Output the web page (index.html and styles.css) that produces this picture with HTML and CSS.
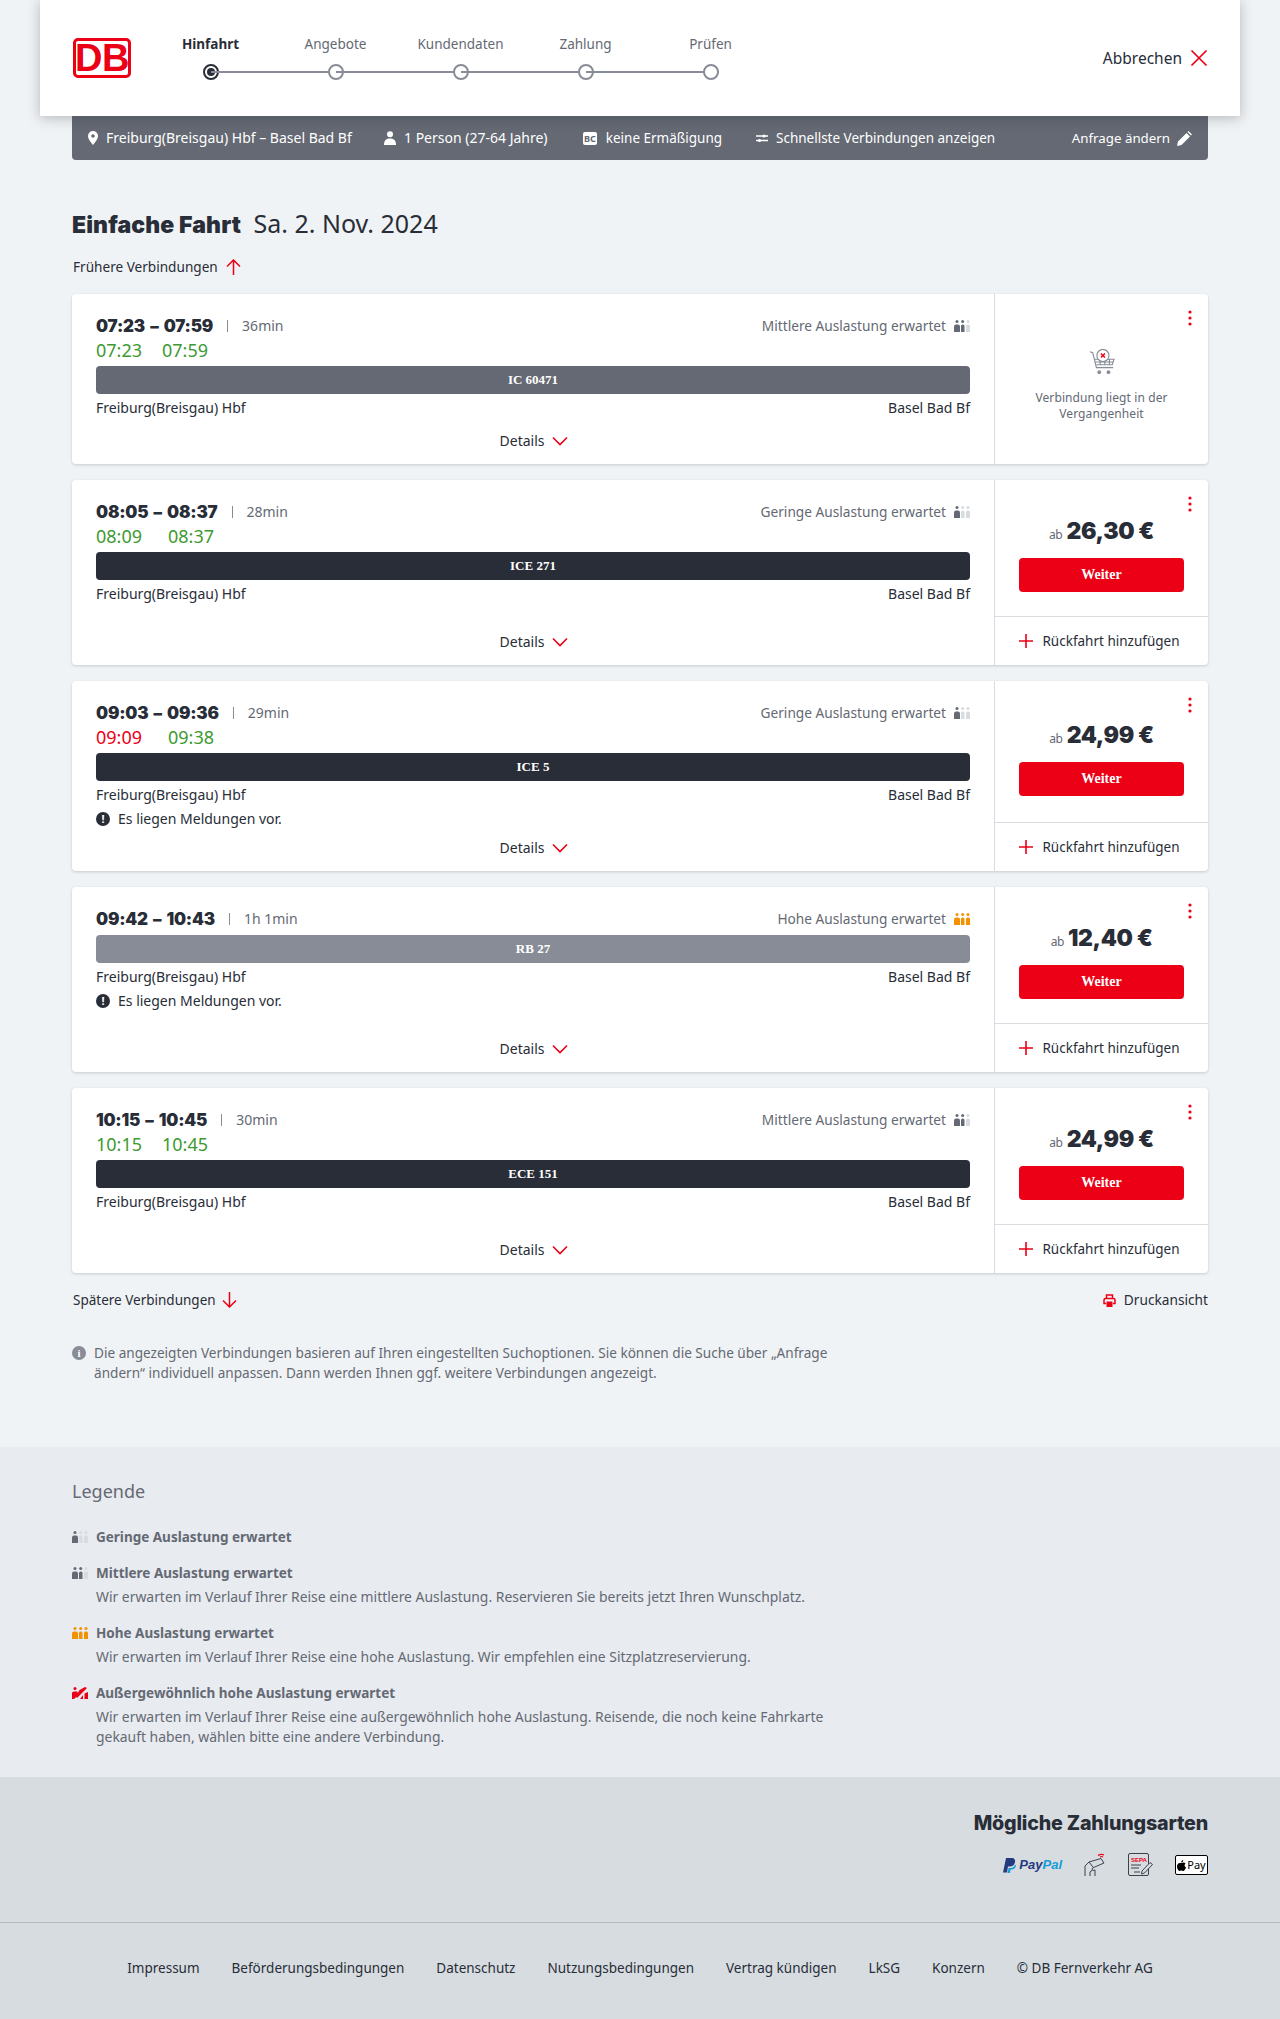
FILE: index.html
```html
<!DOCTYPE html>
<html lang="de">
<head>
    <meta charset="UTF-8">
    <meta name="viewport" content="width=device-width, initial-scale=1.0">
    <title>Einfache Fahrt</title>
    <link rel="stylesheet" href="styles.css">
</head>
<body>
    <svg class="defs" width="0" height="0">
        <symbol id="occ" viewBox="0 0 16 12">
            <circle class="p1" cx="3" cy="1.6" r="1.5"/>
            <path class="p1" d="M0 12V6.500Q0 4.500 2 4.500H4Q6 4.500 6 6.500V12Z"/>
            <circle class="p2" cx="8.700" cy="1.6" r="1.5"/>
            <path class="p2" d="M7 12V6Q7 4.500 8.500 4.500H9Q10.500 4.500 10.500 6V12Z"/>
            <circle class="p3" cx="14" cy="1.6" r="1.5"/>
            <path class="p3" d="M12 12V6Q12 4.500 13.500 4.500H14.500Q16 4.500 16 6V12Z"/>
        </symbol>
        <symbol id="chev" viewBox="0 0 16 10"><path d="M1 1.500 8 8.500 15 1.500" fill="none" stroke="#ec0016" stroke-width="1.6"/></symbol>
        <symbol id="plus" viewBox="0 0 16 16"><path d="M8 1V15M1 8H15" fill="none" stroke="#ec0016" stroke-width="1.6"/></symbol>
        <symbol id="dots" viewBox="0 0 4 16"><circle cx="2" cy="2" r="1.6"/><circle cx="2" cy="8" r="1.6"/><circle cx="2" cy="14" r="1.6"/></symbol>
    </svg>

    <header class="topbar">
        <div class="logo"><span>DB</span></div>
        <ol class="steps">
            <li class="step current"><span class="step-label">Hinfahrt</span><span class="step-dot"></span></li>
            <li class="step"><span class="step-label">Angebote</span><span class="step-dot"></span></li>
            <li class="step"><span class="step-label">Kundendaten</span><span class="step-dot"></span></li>
            <li class="step"><span class="step-label">Zahlung</span><span class="step-dot"></span></li>
            <li class="step"><span class="step-label">Prüfen</span><span class="step-dot"></span></li>
        </ol>
        <a class="cancel">Abbrechen
            <svg width="18" height="18" viewBox="0 0 18 18"><path d="M1.500 1.500 16.500 16.500M16.500 1.500 1.500 16.500" fill="none" stroke="#ec0016" stroke-width="1.7"/></svg>
        </a>
    </header>

    <main class="page">
        <div class="query">
            <span class="query-item query-route">
                <svg width="10" height="14" viewBox="0 0 10 14"><path fill="#fff" fill-rule="evenodd" d="M5 0a5 5 0 0 1 5 5c0 3.500-5 9-5 9S0 8.500 0 5a5 5 0 0 1 5-5Zm0 3.200a1.800 1.800 0 1 0 0 3.600 1.800 1.800 0 0 0 0-3.600Z"/></svg>
                Freiburg(Breisgau) Hbf – Basel Bad Bf
            </span>
            <span class="query-item query-person">
                <svg width="12" height="14" viewBox="0 0 12 14"><circle cx="6" cy="3.200" r="3" fill="#fff"/><path fill="#fff" d="M0 14c0-4 1.500-6.500 6-6.500S12 10 12 14Z"/></svg>
                1 Person (27-64 Jahre)
            </span>
            <span class="query-item query-card">
                <span class="bc">BC</span>
                keine Ermäßigung
            </span>
            <span class="query-item query-filter">
                <svg width="12" height="10" viewBox="0 0 12 10"><path fill="none" stroke="#fff" stroke-width="1.300" d="M0 3H12M0 7.500H12"/><circle cx="8" cy="3" r="1.600" fill="#fff"/><circle cx="3.500" cy="7.500" r="1.600" fill="#fff"/></svg>
                Schnellste Verbindungen anzeigen
            </span>
            <span class="query-edit">Anfrage ändern
                <svg width="15" height="15" viewBox="0 0 15 15"><path fill="#fff" d="M0 15 1 10.500 9.500 2 13 5.500 4.500 14ZM10.500 1 11.500 0 15 3.500 14 4.500Z"/></svg>
            </span>
        </div>

        <h1 class="title"><strong>Einfache Fahrt</strong> Sa. 2. Nov. 2024</h1>

        <a class="more more-up">Frühere Verbindungen
            <svg width="15" height="16" viewBox="0 0 15 16"><path d="M7.500 16V1M1 7.500 7.500 1 14 7.500" fill="none" stroke="#ec0016" stroke-width="1.500"/></svg>
        </a>

        <section class="results">
            <article class="card">
                <div class="card-main">
                    <div class="time-row">
                        <span class="time">07:23 – 07:59</span><span class="sep"></span><span class="dur">36min</span>
                        <span class="occ occ-mid">Mittlere Auslastung erwartet <svg width="16" height="12"><use href="#occ"/></svg></span>
                    </div>
                    <div class="rt"><span class="ok rt-a">07:23</span><span class="ok">07:59</span></div>
                    <div class="train train-ic">IC 60471</div>
                    <div class="stations"><span>Freiburg(Breisgau) Hbf</span><span>Basel Bad Bf</span></div>
                    <a class="details">Details <svg width="16" height="10"><use href="#chev"/></svg></a>
                </div>
                <aside class="card-side">
                    <svg class="menu" width="4" height="16"><use href="#dots"/></svg>
                    <div class="past">
                        <svg width="26" height="26" viewBox="0 0 28 28" fill="none" stroke="#878c96" stroke-width="1.200">
                            <path d="M1 3 4 4 8 20H26M6 11H27L25 17H8M7 14H26M12 11V17M17 11V17M22 11V17"/>
                            <circle cx="15" cy="7" r="6.500" fill="#fff"/>
                            <path d="M12.800 4.800 17.200 9.200M17.200 4.800 12.800 9.200" stroke="#ec0016" stroke-width="1.600"/>
                            <circle cx="11" cy="25" r="2" fill="#878c96" stroke="none"/>
                            <circle cx="21" cy="25" r="2" fill="#878c96" stroke="none"/>
                        </svg>
                        <p>Verbindung liegt in der<br>Vergangenheit</p>
                    </div>
                </aside>
            </article>

            <article class="card">
                <div class="card-main">
                    <div class="time-row">
                        <span class="time">08:05 – 08:37</span><span class="sep"></span><span class="dur">28min</span>
                        <span class="occ occ-low">Geringe Auslastung erwartet <svg width="16" height="12"><use href="#occ"/></svg></span>
                    </div>
                    <div class="rt"><span class="ok rt-b">08:09</span><span class="ok">08:37</span></div>
                    <div class="train train-ice">ICE 271</div>
                    <div class="stations"><span>Freiburg(Breisgau) Hbf</span><span>Basel Bad Bf</span></div>
                    <a class="details">Details <svg width="16" height="10"><use href="#chev"/></svg></a>
                </div>
                <aside class="card-side">
                    <svg class="menu" width="4" height="16"><use href="#dots"/></svg>
                    <div class="offer">
                        <div class="price"><small>ab</small> 26,30 €</div>
                        <button class="next">Weiter</button>
                    </div>
                    <a class="return"><svg width="16" height="16"><use href="#plus"/></svg> Rückfahrt hinzufügen</a>
                </aside>
            </article>

            <article class="card">
                <div class="card-main">
                    <div class="time-row">
                        <span class="time">09:03 – 09:36</span><span class="sep"></span><span class="dur">29min</span>
                        <span class="occ occ-low">Geringe Auslastung erwartet <svg width="16" height="12"><use href="#occ"/></svg></span>
                    </div>
                    <div class="rt"><span class="late rt-b">09:09</span><span class="ok">09:38</span></div>
                    <div class="train train-ice">ICE 5</div>
                    <div class="stations"><span>Freiburg(Breisgau) Hbf</span><span>Basel Bad Bf</span></div>
                    <div class="notice"><span class="notice-icon">!</span>Es liegen Meldungen vor.</div>
                    <a class="details">Details <svg width="16" height="10"><use href="#chev"/></svg></a>
                </div>
                <aside class="card-side">
                    <svg class="menu" width="4" height="16"><use href="#dots"/></svg>
                    <div class="offer">
                        <div class="price"><small>ab</small> 24,99 €</div>
                        <button class="next">Weiter</button>
                    </div>
                    <a class="return"><svg width="16" height="16"><use href="#plus"/></svg> Rückfahrt hinzufügen</a>
                </aside>
            </article>

            <article class="card">
                <div class="card-main">
                    <div class="time-row">
                        <span class="time">09:42 – 10:43</span><span class="sep"></span><span class="dur">1h 1min</span>
                        <span class="occ occ-high">Hohe Auslastung erwartet <svg width="16" height="12"><use href="#occ"/></svg></span>
                    </div>
                    <div class="train train-rb">RB 27</div>
                    <div class="stations"><span>Freiburg(Breisgau) Hbf</span><span>Basel Bad Bf</span></div>
                    <div class="notice"><span class="notice-icon">!</span>Es liegen Meldungen vor.</div>
                    <a class="details">Details <svg width="16" height="10"><use href="#chev"/></svg></a>
                </div>
                <aside class="card-side">
                    <svg class="menu" width="4" height="16"><use href="#dots"/></svg>
                    <div class="offer">
                        <div class="price"><small>ab</small> 12,40 €</div>
                        <button class="next">Weiter</button>
                    </div>
                    <a class="return"><svg width="16" height="16"><use href="#plus"/></svg> Rückfahrt hinzufügen</a>
                </aside>
            </article>

            <article class="card">
                <div class="card-main">
                    <div class="time-row">
                        <span class="time">10:15 – 10:45</span><span class="sep"></span><span class="dur">30min</span>
                        <span class="occ occ-mid">Mittlere Auslastung erwartet <svg width="16" height="12"><use href="#occ"/></svg></span>
                    </div>
                    <div class="rt"><span class="ok rt-a">10:15</span><span class="ok">10:45</span></div>
                    <div class="train train-ice">ECE 151</div>
                    <div class="stations"><span>Freiburg(Breisgau) Hbf</span><span>Basel Bad Bf</span></div>
                    <a class="details">Details <svg width="16" height="10"><use href="#chev"/></svg></a>
                </div>
                <aside class="card-side">
                    <svg class="menu" width="4" height="16"><use href="#dots"/></svg>
                    <div class="offer">
                        <div class="price"><small>ab</small> 24,99 €</div>
                        <button class="next">Weiter</button>
                    </div>
                    <a class="return"><svg width="16" height="16"><use href="#plus"/></svg> Rückfahrt hinzufügen</a>
                </aside>
            </article>
        </section>

        <div class="after-list">
            <a class="more">Spätere Verbindungen
                <svg width="15" height="16" viewBox="0 0 15 16"><path d="M7.500 0V15M1 8.500 7.500 15 14 8.500" fill="none" stroke="#ec0016" stroke-width="1.500"/></svg>
            </a>
            <a class="print">
                <svg width="13" height="13" viewBox="0 0 13 13"><path fill="none" stroke="#ec0016" stroke-width="1.500" d="M3.500 4V1H9.500V4M3 9.500H1V6Q1 4.500 2.500 4.500H10.500Q12 4.500 12 6V9.500H10"/><path fill="#ec0016" d="M3.500 7.500H9.500V13H3.500Z"/></svg>
                Druckansicht
            </a>
        </div>

        <p class="note"><span class="note-icon">i</span>Die angezeigten Verbindungen basieren auf Ihren eingestellten Suchoptionen. Sie können die Suche über „Anfrage ändern“ individuell anpassen. Dann werden Ihnen ggf. weitere Verbindungen angezeigt.</p>
    </main>

    <section class="legend">
        <div class="legend-inner">
            <h2>Legende</h2>
            <dl class="legend-list">
                <div class="legend-item occ-low">
                    <dt><svg width="16" height="12"><use href="#occ"/></svg>Geringe Auslastung erwartet</dt>
                </div>
                <div class="legend-item occ-mid">
                    <dt><svg width="16" height="12"><use href="#occ"/></svg>Mittlere Auslastung erwartet</dt>
                    <dd>Wir erwarten im Verlauf Ihrer Reise eine mittlere Auslastung. Reservieren Sie bereits jetzt Ihren Wunschplatz.</dd>
                </div>
                <div class="legend-item occ-high">
                    <dt><svg width="16" height="12"><use href="#occ"/></svg>Hohe Auslastung erwartet</dt>
                    <dd>Wir erwarten im Verlauf Ihrer Reise eine hohe Auslastung. Wir empfehlen eine Sitzplatzreservierung.</dd>
                </div>
                <div class="legend-item occ-full">
                    <dt><svg width="16" height="12" viewBox="0 0 16 12"><circle cx="3" cy="1.600" r="1.500" fill="#ec0016"/><path fill="#ec0016" d="M0 12V6Q0 4.500 2 4.500H5L6 5.500V8.500L2 12Z"/><path fill="#ec0016" d="M7.500 3 13 0 15 1 5 11 4 9.500ZM8 12 11 8V12ZM12.500 12V6.500L16 5V12Z"/></svg>Außergewöhnlich hohe Auslastung erwartet</dt>
                    <dd>Wir erwarten im Verlauf Ihrer Reise eine außergewöhnlich hohe Auslastung. Reisende, die noch keine Fahrkarte gekauft haben, wählen bitte eine andere Verbindung.</dd>
                </div>
            </dl>
        </div>
    </section>

    <section class="payments">
        <h2>Mögliche Zahlungsarten</h2>
        <div class="pay-icons">
            <span class="paypal">
                <svg width="13" height="15" viewBox="0 0 13 15"><path fill="#253b80" d="M3 0H8.500C11.500 0 12.500 2 12 4.200 11.400 7 9.500 8.500 6.500 8.500H5L4 14.500H0Z"/><path fill="#179bd7" d="M5.500 10H8C10 10 11.500 8.500 12 6.500L13 7.500C12.500 10 11 11.500 8.500 11.500H7.500L7 15H4.500Z"/></svg>
                <b>Pay</b><i>Pal</i>
            </span>
            <svg width="22" height="24" viewBox="0 0 22 24" fill="none" stroke="#3c414b" stroke-width="1">
                <path d="M1 23V13L5 9 17 5.500 20 10 8.500 15 8 17.500 6 19V23M11 23V17L8.500 17.500M5 9 9 14"/>
                <path d="M14 2.500Q17 0.500 20 2M16 4Q17.500 3 19 4" stroke="#ec0016" stroke-width="1.200"/>
            </svg>
            <svg width="25" height="24" viewBox="0 0 25 24">
                <rect x="0.500" y="0.500" width="20" height="22" rx="1.500" fill="none" stroke="#3c414b"/>
                <text x="3" y="8.500" class="sepa">SEPA</text>
                <path d="M3 12H13M3 15H11M6 19H12" stroke="#3c414b" fill="none"/>
                <path d="M14 18 22 9.500 24.500 11.500 16.500 20 13.500 21Z" fill="#d7dce1" stroke="#3c414b"/>
            </svg>
            <span class="applepay">
                <svg width="9" height="11" viewBox="0 0 9 11"><path d="M6.200 0C6.300 1.200 5.300 2.400 4.200 2.400 4 1.200 5.200 0.100 6.200 0ZM4.300 3C5 3 5.500 2.500 6.500 2.500 7.300 2.500 8 3 8.500 3.600 7 4.500 7.300 6.800 9 7.500 8.500 9 7.300 11 6.300 11 5.500 11 5.200 10.500 4.300 10.500 3.400 10.500 3.100 11 2.400 11 1.300 11 0 8.700 0 6.500 0 4.300 1.400 3 2.700 2.900 3.400 2.900 3.900 3 4.300 3Z"/></svg>Pay
            </span>
        </div>
    </section>

    <footer class="footer">
        <a>Impressum</a>
        <a>Beförderungsbedingungen</a>
        <a>Datenschutz</a>
        <a>Nutzungsbedingungen</a>
        <a>Vertrag kündigen</a>
        <a>LkSG</a>
        <a>Konzern</a>
        <span>© DB Fernverkehr AG</span>
    </footer>
</body>
</html>
```

FILE: styles.css
```css
* {
    box-sizing: border-box;
}

body {
    margin: 0;
    background: #f0f3f5;
    color: #282d37;
    font-family: "Noto Sans", "Open Sans", sans-serif;
    font-size: 14px;
    line-height: 20px;
}

.defs {
    position: absolute;
}

h1, h2, p, ol, dl, dd {
    margin: 0;
    padding: 0;
}

svg {
    flex: none;
}

/* top bar */
.topbar {
    position: relative;
    z-index: 2;
    display: flex;
    align-items: center;
    height: 116px;
    margin: 0 40px;
    padding: 0 32px 0 33px;
    background: #fff;
    box-shadow: 0 2px 12px rgba(40, 45, 55, 0.3);
}

.logo {
    display: flex;
    align-items: center;
    justify-content: center;
    width: 58px;
    height: 40px;
    border: 3px solid #ec0016;
    border-radius: 5px;
    color: #ec0016;
    font-family: "Liberation Sans Narrow", "Liberation Sans", sans-serif;
    font-size: 38px;
    font-weight: 700;
    letter-spacing: -0.5px;
}

.steps {
    display: flex;
    list-style: none;
    margin-left: 17px;
}

.step {
    position: relative;
    display: flex;
    flex-direction: column;
    align-items: center;
    width: 125px;
    height: 56px;
    padding-top: 4px;
    color: #646973;
    font-size: 13.5px;
}

.step + .step::before {
    content: "";
    position: absolute;
    top: 41px;
    left: -62px;
    width: 125px;
    height: 2px;
    background: #878c96;
}

.step-label {
    line-height: 20px;
}

.step-dot {
    position: relative;
    width: 16px;
    height: 16px;
    margin-top: 10px;
    border: 2px solid #878c96;
    border-radius: 50%;
    background: #fff;
}

.current {
    color: #282d37;
    font-weight: 700;
}

.current .step-dot {
    border-color: #282d37;
}

.current .step-dot::after {
    content: "";
    position: absolute;
    top: 2px;
    left: 2px;
    width: 8px;
    height: 8px;
    border-radius: 50%;
    background: #282d37;
}

.cancel {
    display: flex;
    align-items: center;
    gap: 8px;
    margin-left: auto;
    font-size: 15.5px;
}

/* page */
.page {
    width: 1136px;
    margin: 0 auto;
    height: 1331px;
}

.query {
    display: flex;
    align-items: center;
    height: 44px;
    padding: 0 16px;
    background: #646973;
    border-radius: 0 0 4px 4px;
    color: #fff;
    font-size: 13.5px;
}

.query-item {
    display: flex;
    align-items: center;
    gap: 8px;
}

.query-route {
    width: 296px;
    font-size: 14px;
}

.query-person {
    width: 199px;
    font-size: 14px;
}

.query-card {
    width: 173px;
    gap: 9px;
}

.bc {
    padding: 0 1px;
    background: #fff;
    border-radius: 2px;
    color: #646973;
    font-size: 9px;
    font-weight: 700;
    line-height: 13px;
}

.query-edit {
    display: flex;
    align-items: center;
    gap: 7px;
    margin-left: auto;
    font-size: 13.3px;
}

.title {
    margin-top: 46px;
    font-size: 25px;
    font-weight: 400;
    line-height: 34px;
}

.title strong {
    margin-right: 6px;
    font-family: "Inter", sans-serif;
    font-size: 23px;
    font-weight: 900;
    letter-spacing: 0.1px;
}

.more {
    display: flex;
    align-items: center;
    gap: 8px;
    font-size: 13.6px;
}

.more-up {
    margin-top: 15px;
    height: 20px;
    padding-left: 1px;
}

.results {
    display: flex;
    flex-direction: column;
    gap: 16px;
    margin-top: 17px;
}

/* cards */
.card {
    display: flex;
    background: #fff;
    border-radius: 4px;
    box-shadow: 0 1px 3px rgba(40, 45, 55, 0.2);
}

.card-main {
    display: flex;
    flex-direction: column;
    width: 922px;
    padding: 20px 24px 0;
}

.time-row {
    display: flex;
    align-items: center;
    height: 24px;
}

.time {
    font-family: "Inter", sans-serif;
    font-size: 17px;
    font-weight: 900;
    letter-spacing: -0.2px;
    word-spacing: 2px;
}

.sep {
    width: 1px;
    height: 12px;
    margin: 0 14px;
    background: #878c96;
}

.dur {
    color: #646973;
}

.occ {
    display: flex;
    align-items: center;
    gap: 8px;
    margin-left: auto;
    color: #646973;
    font-size: 13.7px;
}

.p1 {
    fill: var(--p1);
}

.p2 {
    fill: var(--p2);
}

.p3 {
    fill: var(--p3);
}

.occ-low {
    --p1: #646973;
    --p2: #d7dce1;
    --p3: #d7dce1;
}

.occ-mid {
    --p1: #646973;
    --p2: #646973;
    --p3: #d7dce1;
}

.occ-high {
    --p1: #f39200;
    --p2: #f39200;
    --p3: #f39200;
}

.rt {
    display: flex;
    height: 24px;
    font-size: 18px;
    line-height: 24px;
}

.rt-a {
    width: 66px;
}

.rt-b {
    width: 72px;
}

.ok {
    color: #3d9a31;
}

.late {
    color: #ec0016;
}

.train {
    height: 28px;
    margin-top: 4px;
    border-radius: 4px;
    color: #fff;
    font-family: "Liberation Serif", serif;
    font-size: 13px;
    font-weight: 700;
    line-height: 28px;
    text-align: center;
}

.train-ic {
    background: #646973;
}

.train-ice {
    background: #282d37;
}

.train-rb {
    background: #878c96;
}

.stations {
    display: flex;
    justify-content: space-between;
    margin-top: 4px;
}

.notice {
    display: flex;
    align-items: center;
    margin: 4px 0 -4px;
}

.notice-icon, .note-icon {
    display: inline-block;
    flex: none;
    width: 14px;
    height: 14px;
    margin-right: 8px;
    border-radius: 50%;
    background: #282d37;
    color: #fff;
    font-size: 11px;
    font-weight: 700;
    line-height: 14px;
    text-align: center;
}

.details {
    display: flex;
    align-items: center;
    justify-content: center;
    gap: 8px;
    height: 46px;
    margin-top: auto;
    padding-left: 2px;
}

.card-side {
    position: relative;
    display: flex;
    flex-direction: column;
    width: 214px;
    border-left: 1px solid #d7dce1;
}

.menu {
    position: absolute;
    top: 16px;
    right: 16px;
    fill: #ec0016;
}

.past {
    display: flex;
    flex-direction: column;
    align-items: center;
    justify-content: center;
    flex: 1;
    gap: 15px;
    padding-top: 13px;
    color: #646973;
    font-size: 12px;
    line-height: 16px;
    letter-spacing: 0.1px;
    text-align: center;
}

.offer {
    flex: 1;
    display: flex;
    flex-direction: column;
    align-items: center;
    justify-content: center;
    min-height: 136px;
    padding: 33px 0 24px;
}

.price {
    height: 37px;
    margin-bottom: 8px;
    font-family: "Inter", sans-serif;
    font-size: 23px;
    font-weight: 900;
    letter-spacing: -0.4px;
    line-height: 37px;
}

.price small {
    color: #646973;
    font-family: "Noto Sans", sans-serif;
    font-size: 12px;
    font-weight: 400;
}

.next {
    width: 165px;
    height: 34px;
    border: none;
    border-radius: 4px;
    background: #ec0016;
    color: #fff;
    font-family: "Liberation Serif", serif;
    font-size: 14px;
    font-weight: 700;
}

.return {
    display: flex;
    align-items: center;
    justify-content: center;
    gap: 8px;
    height: 49px;
    padding-right: 5px;
    border-top: 1px solid #d7dce1;
    font-size: 13.5px;
}

/* below the list */
.after-list {
    display: flex;
    justify-content: space-between;
    margin-top: 17px;
    padding-left: 1px;
}

.after-list .more {
    gap: 6px;
    font-size: 13.5px;
}

.print {
    display: flex;
    align-items: center;
    gap: 8px;
    font-size: 13.7px;
}

.note {
    width: 770px;
    margin-top: 33px;
    padding-left: 22px;
    position: relative;
    color: #646973;
    font-size: 13.6px;
}

.note-icon {
    position: absolute;
    top: 3px;
    left: 0;
    background: #878c96;
    font-family: "Liberation Serif", serif;
}

/* legend */
.legend {
    height: 330px;
    padding-top: 31px;
    background: #e8ebf0;
}

.legend-inner {
    width: 1136px;
    margin: 0 auto;
}

.legend h2 {
    color: #646973;
    font-size: 18px;
    font-weight: 400;
    line-height: 26px;
}

.legend-list {
    margin-top: 23px;
    width: 770px;
}

.legend-item {
    margin-bottom: 16px;
    padding-left: 24px;
    color: #646973;
}

.legend-item dt {
    position: relative;
    font-size: 13.5px;
    font-weight: 700;
}

.legend-item dt svg {
    position: absolute;
    top: 4px;
    left: -24px;
}

.legend-item dd {
    margin-top: 4px;
    font-size: 13.9px;
}

/* payment methods */
.payments {
    height: 146px;
    padding: 33px 72px 0;
    background: #d7dce1;
    border-bottom: 1px solid #b4bac3;
    text-align: right;
}

.payments h2 {
    font-family: "Inter", sans-serif;
    font-size: 19.7px;
    font-weight: 800;
    letter-spacing: -0.2px;
    line-height: 26px;
}

.pay-icons {
    display: flex;
    align-items: center;
    justify-content: flex-end;
    gap: 22px;
    margin-top: 14px;
    height: 30px;
}

.paypal {
    display: flex;
    align-items: center;
    gap: 3px;
    font-family: "Liberation Sans", sans-serif;
    font-size: 13px;
    font-style: italic;
    font-weight: 700;
}

.paypal b {
    margin-right: -3px;
    color: #253b80;
}

.paypal i {
    color: #179bd7;
}

.sepa {
    fill: #ec0016;
    font-family: "Liberation Sans", sans-serif;
    font-size: 6px;
    font-weight: 700;
}

.applepay {
    display: flex;
    align-items: center;
    justify-content: center;
    gap: 1px;
    width: 33px;
    height: 20px;
    border: 1px solid #000;
    border-radius: 2px;
    background: #fff;
    color: #000;
    font-size: 11px;
}

/* footer */
.footer {
    display: flex;
    align-items: center;
    justify-content: center;
    gap: 32px;
    height: 96px;
    padding-bottom: 6px;
    background: #d7dce1;
    font-size: 13.5px;
}
```
